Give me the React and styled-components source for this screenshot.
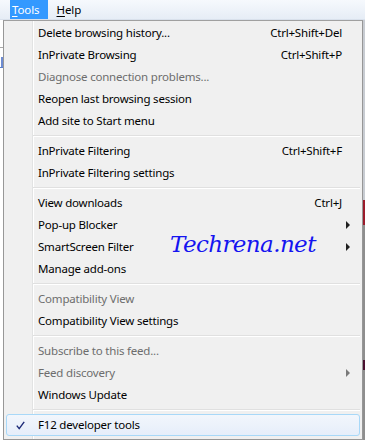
import React from 'react'
import styled, { createGlobalStyle } from 'styled-components'

const GlobalStyle = createGlobalStyle`
  html, body {
    margin: 0;
    padding: 0;
    background: #ffffff;
    overflow: hidden;
  }
  body {
    font-family: 'Noto Sans', 'Open Sans', sans-serif;
  }
`

const Screen = styled.div`
  position: relative;
  width: 365px;
  height: 440px;
  overflow: hidden;
  background: #ffffff;
  display: flex;
  flex-direction: column;
`

const MenuBar = styled.div`
  display: flex;
  align-items: stretch;
  height: 19px;
  padding-left: 10px;
  gap: 7px;
  background: linear-gradient(to bottom, #f6f9fd, #e6edf6);
  border-bottom: 1px solid #d9e1ec;
  font-size: 11.5px;
  letter-spacing: -0.1px;
`

const BarItem = styled.div`
  display: flex;
  align-items: center;
  padding: ${(props) => (props.active ? '0 8px 0 2px' : '0 7px 0 2px')};
  color: ${(props) => (props.active ? '#ffffff' : '#000000')};
  background: ${(props) => (props.active ? '#3399ff' : 'transparent')};

  u {
    text-decoration-thickness: 1px;
    text-underline-offset: 2px;
  }
`

const Body = styled.div`
  flex: 1;
  display: flex;
  min-height: 0;
`

const PageEdge = styled.div`
  width: 3px;
  display: flex;
  flex-direction: column;
  background: #ffffff;
`

const EdgeRule = styled.div`
  height: 1px;
  margin-top: 27px;
  background: #a8a8a8;
`

const EdgeLink = styled.div`
  height: 10px;
  margin-top: 9px;
  border-bottom: 1px solid #3060c0;
  background: linear-gradient(to right, #ffffff 1px, #4a70c8 1px);
  opacity: 0.8;
`

const Menu = styled.div`
  position: relative;
  width: 354px;
  height: 416px;
  padding: 1px 2px;
  border: 1px solid #979797;
  border-top-color: #a0a0a0;
  background: linear-gradient(
    to right,
    #f0f0f0 28px,
    #e2e3e3 28px 29px,
    #ffffff 29px 30px,
    #f0f0f0 30px
  );
  font-size: 11.5px;
  letter-spacing: -0.2px;
  color: #000000;
`

const ScrollEdge = styled.div`
  flex: 1;
  background: linear-gradient(
    to bottom,
    #c8ccd2 0 180px,
    #9b1b2b 180px 205px,
    #8e8e8e 205px 340px,
    #4a1030 340px 350px,
    #8e8e8e 350px
  );
`

const Item = styled.div`
  position: relative;
  display: flex;
  align-items: center;
  height: 20px;
  padding: 0 17px 1px 31px;
  box-sizing: border-box;
  height: 22px;
  border: 1px solid ${(props) => (props.hover ? '#a8d8f8' : 'transparent')};
  border-radius: 3px;
  background: ${(props) =>
    props.hover
      ? 'linear-gradient(to bottom, #f2f6fc, #e6eefa)'
      : 'transparent'};
  color: ${(props) => (props.disabled ? '#6d6d6d' : '#000000')};
  white-space: nowrap;
`

const Label = styled.span`
  flex: 1;
`

const Shortcut = styled.span`
  text-align: right;
`

const Arrow = styled.span`
  position: absolute;
  right: 9px;
  top: 6px;
  width: 0;
  height: 0;
  border-top: 4px solid transparent;
  border-bottom: 4px solid transparent;
  border-left: 4px solid ${(props) => (props.disabled ? '#7a7a7a' : '#202020')};
`

const Check = styled.svg`
  position: absolute;
  left: 9px;
  top: 6px;
`

const Separator = styled.div`
  height: 8px;
  margin-left: 27px;
  display: flex;
  flex-direction: column;
  justify-content: center;

  &::before {
    content: '';
    display: block;
    height: 1px;
    background: #e0e0e0;
  }
  &::after {
    content: '';
    display: block;
    height: 1px;
    background: #ffffff;
  }
`

const Watermark = styled.div`
  position: absolute;
  left: 170px;
  top: 231px;
  font-family: 'DejaVu Serif', serif;
  font-style: italic;
  font-size: 23px;
  color: #1414f0;
  letter-spacing: -0.6px;
  pointer-events: none;
`

const groups = [
  [
    { label: 'Delete browsing history...', shortcut: 'Ctrl+Shift+Del' },
    { label: 'InPrivate Browsing', shortcut: 'Ctrl+Shift+P' },
    { label: 'Diagnose connection problems...', disabled: true },
    { label: 'Reopen last browsing session' },
    { label: 'Add site to Start menu' },
  ],
  [
    { label: 'InPrivate Filtering', shortcut: 'Ctrl+Shift+F' },
    { label: 'InPrivate Filtering settings' },
  ],
  [
    { label: 'View downloads', shortcut: 'Ctrl+J' },
    { label: 'Pop-up Blocker', submenu: true },
    { label: 'SmartScreen Filter', submenu: true },
    { label: 'Manage add-ons' },
  ],
  [
    { label: 'Compatibility View', disabled: true },
    { label: 'Compatibility View settings' },
  ],
  [
    { label: 'Subscribe to this feed...', disabled: true },
    { label: 'Feed discovery', disabled: true, submenu: true },
    { label: 'Windows Update' },
  ],
  [{ label: 'F12 developer tools', checked: true, hover: true }],
]

const MenuItem = ({ item }) => (
  <Item disabled={item.disabled} hover={item.hover ? 1 : 0}>
    {item.checked && (
      <Check width="9" height="9" viewBox="0 0 9 9">
        <path
          d="M0.8 4.6 L3.2 7.6 L8.2 0.8"
          fill="none"
          stroke="#1c2a78"
          strokeWidth="1.4"
        />
      </Check>
    )}
    <Label>{item.label}</Label>
    {item.shortcut && <Shortcut>{item.shortcut}</Shortcut>}
    {item.submenu && <Arrow disabled={item.disabled} />}
  </Item>
)

const App = () => (
  <Screen>
    <GlobalStyle />
    <MenuBar>
      <BarItem active>
        <span>
          <u>T</u>ools
        </span>
      </BarItem>
      <BarItem>
        <span>
          <u>H</u>elp
        </span>
      </BarItem>
    </MenuBar>
    <Body>
      <PageEdge>
        <EdgeRule />
        <EdgeLink />
      </PageEdge>
      <Menu>
        {groups.map((group, index) => (
          <React.Fragment key={index}>
            {index > 0 && <Separator />}
            {group.map((item) => (
              <MenuItem key={item.label} item={item} />
            ))}
          </React.Fragment>
        ))}
      </Menu>
      <ScrollEdge />
    </Body>
    <Watermark>Techrena.net</Watermark>
  </Screen>
)

export default App
